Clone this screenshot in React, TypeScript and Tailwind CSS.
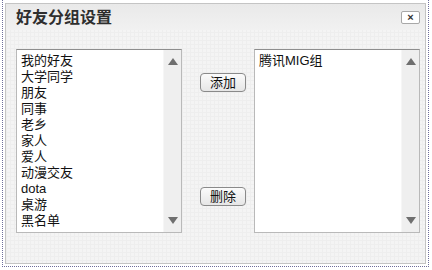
import React from 'react'

const leftGroups = ['我的好友', '大学同学', '朋友', '同事', '老乡', '家人', '爱人', '动漫交友', 'dota', '桌游', '黑名单']
const rightGroups = ['腾讯MIG组']

const font = "font-['Liberation_Sans','Noto_Sans_CJK_SC',sans-serif]"

function ListBox({ items }: { items: string[] }) {
  return (
    <div className="flex w-[166px] h-[184px] border border-[#b9b9b9] border-t-[#8e8e8e] bg-white">
      <ul className="flex-1 pl-[4px] pt-[3px] text-[13px] leading-[16px] text-[#111]">
        {items.map((item) => (
          <li key={item} className="h-[16px] whitespace-nowrap">{item}</li>
        ))}
      </ul>
      <div className="w-[18px] flex flex-col justify-between items-center bg-[#efefef] border-l border-[#f6f6f6] py-[8px]">
        <span className="w-0 h-0 border-l-[5px] border-r-[5px] border-b-[7px] border-l-transparent border-r-transparent border-b-[#6f6f6f]" />
        <span className="w-0 h-0 border-l-[5px] border-r-[5px] border-t-[7px] border-l-transparent border-r-transparent border-t-[#6f6f6f]" />
      </div>
    </div>
  )
}

function Button({ label }: { label: string }) {
  return (
    <button className="w-[46px] h-[19px] rounded-[4px] border border-[#8a8a8a] bg-gradient-to-b from-[#fbfbfb] to-[#e6e6e6] text-[13px] leading-[16px] text-[#111]">
      {label}
    </button>
  )
}

export default function App() {
  return (
    <div className={`w-[432px] h-[270px] bg-white ${font}`}>
      <div className="ml-[2px] w-[427px] h-[267px] border-l border-r border-b border-dotted border-[#6e6e9a] pl-[2px] pr-[2px] pt-[3px]">
        {/* Dialog */}
        <div className="w-[421px] h-[261px] border border-[#c4c4c4] bg-[#f4f4f4] bg-[linear-gradient(to_right,#eeeeee_1px,transparent_1px),linear-gradient(to_bottom,#eeeeee_1px,transparent_1px)] bg-[size:4px_4px]">
          {/* Header */}
          <div className="h-[26px] flex items-center justify-between pl-[10px] pr-[5px] bg-gradient-to-b from-[#e9e9e9] to-[#f1f1f1]">
            <h1 className="text-[16px] font-bold text-[#2e2e2e] leading-[20px] pt-[2px]">好友分组设置</h1>
            <button className="w-[19px] h-[13px] flex items-center justify-center border border-[#a8a8a8] rounded-[2px] bg-white text-[11px] font-bold leading-none text-[#333]">
              ×
            </button>
          </div>

          {/* Body */}
          <div className="flex pl-[10px] pt-[19px]">
            <ListBox items={leftGroups} />
            <div className="w-[72px] flex flex-col items-start pl-[18px] pt-[24px] gap-[95px]">
              <Button label="添加" />
              <Button label="删除" />
            </div>
            <ListBox items={rightGroups} />
          </div>
        </div>
      </div>
    </div>
  )
}
